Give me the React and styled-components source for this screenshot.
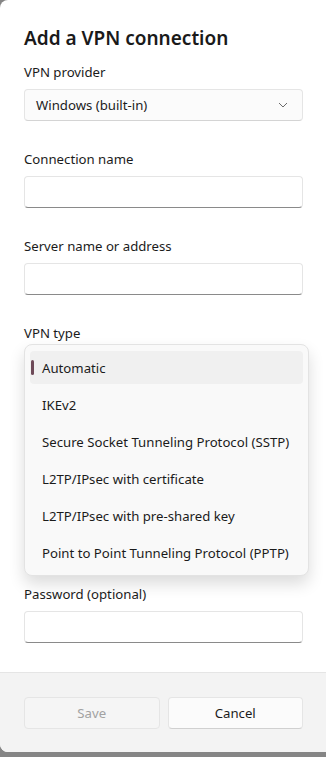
import React from "react";
import styled, { createGlobalStyle } from "styled-components";

const Global = createGlobalStyle`
  html, body { margin: 0; padding: 0; }
  body {
    background: #858585;
    width: 326px;
    height: 757px;
    overflow: hidden;
    font-family: "Noto Sans", "Open Sans", sans-serif;
    color: #1b1b1b;
  }
`;

const Dialog = styled.div`
  width: 340px;
  height: 752px;
  background: #ffffff;
  border-radius: 8px;
  display: flex;
  flex-direction: column;
  overflow: hidden;
`;

const Body = styled.div`
  position: relative;
  flex: 1;
  padding: 24px 37px 0 24px;
  display: flex;
  flex-direction: column;
`;

const Title = styled.h1`
  margin: 0 0 10px;
  font-size: 19px;
  line-height: 28px;
  font-weight: 600;
  color: #1a1a1a;
`;

const Field = styled.div`
  display: flex;
  flex-direction: column;
  gap: 7px;
  margin-bottom: 28px;
`;

const Label = styled.div`
  font-size: 13.2px;
  line-height: 20px;
  height: 20px;
  color: #1b1b1b;
  white-space: nowrap;
`;

const Combo = styled.div`
  height: 32px;
  box-sizing: border-box;
  border: 1px solid #e5e5e5;
  border-bottom-color: #d4d4d4;
  border-radius: 4px;
  background: #fbfbfb;
  display: flex;
  align-items: center;
  justify-content: space-between;
  padding: 0 14px 0 11px;
  font-size: 13.2px;
  white-space: nowrap;
`;

const TextBox = styled.div`
  height: 32px;
  box-sizing: border-box;
  border: 1px solid #e5e5e5;
  border-bottom: 1px solid #8a8a8a;
  border-radius: 4px;
  background: #ffffff;
`;

const Popup = styled.div`
  position: absolute;
  left: 24px;
  top: 344px;
  width: 285px;
  box-sizing: border-box;
  padding: 6px 5px;
  background: #f9f9f9;
  border: 1px solid #e3e3e3;
  border-radius: 8px;
  box-shadow: 0 8px 16px rgba(0, 0, 0, 0.14);
  display: flex;
  flex-direction: column;
  gap: 4px;
`;

const Item = styled.div`
  position: relative;
  height: 33px;
  display: flex;
  align-items: center;
  padding-left: 12px;
  border-radius: 4px;
  font-size: 13.2px;
  white-space: nowrap;
  color: #1b1b1b;
  background: ${(p) => (p.$selected ? "#f0f0f0" : "transparent")};
`;

const Indicator = styled.span`
  position: absolute;
  left: 1px;
  top: 9px;
  width: 3px;
  height: 15px;
  border-radius: 2px;
  background: #6e4a58;
`;

const Footer = styled.div`
  height: 80px;
  box-sizing: border-box;
  border-top: 1px solid #e5e5e5;
  background: #f3f3f3;
  padding: 24px 37px 0 24px;
  display: grid;
  grid-template-columns: 1fr 1fr;
  column-gap: 8px;
  align-items: start;
`;

const Button = styled.button`
  height: 32px;
  box-sizing: border-box;
  border-radius: 4px;
  font-family: inherit;
  font-size: 13.2px;
  border: 1px solid #e5e5e5;
  border-bottom-color: ${(p) => (p.$disabled ? "#e5e5e5" : "#d0d0d0")};
  background: ${(p) => (p.$disabled ? "#f5f5f5" : "#fbfbfb")};
  color: ${(p) => (p.$disabled ? "#a2a2a2" : "#1b1b1b")};
`;

const Chevron = () => (
  <svg width="10" height="6" viewBox="0 0 10 6">
    <path d="M1 1 L5 5 L9 1" fill="none" stroke="#6b6b6b" strokeWidth="1" />
  </svg>
);

const types = [
  "Automatic",
  "IKEv2",
  "Secure Socket Tunneling Protocol (SSTP)",
  "L2TP/IPsec with certificate",
  "L2TP/IPsec with pre-shared key",
  "Point to Point Tunneling Protocol (PPTP)",
];

export default function App() {
  return (
    <>
      <Global />
      <Dialog>
        <Body>
          <Title>Add a VPN connection</Title>
          <Field>
            <Label>VPN provider</Label>
            <Combo>
              <span>Windows (built-in)</span>
              <Chevron />
            </Combo>
          </Field>
          <Field>
            <Label>Connection name</Label>
            <TextBox />
          </Field>
          <Field>
            <Label>Server name or address</Label>
            <TextBox />
          </Field>
          <Field>
            <Label>VPN type</Label>
            <Combo />
          </Field>
          <Field>
            <Label />
            <Combo />
          </Field>
          <Field>
            <Label />
            <TextBox />
          </Field>
          <Field>
            <Label>Password (optional)</Label>
            <TextBox />
          </Field>
          <Popup>
            {types.map((t, i) => (
              <Item key={t} $selected={i === 0}>
                {i === 0 && <Indicator />}
                {t}
              </Item>
            ))}
          </Popup>
        </Body>
        <Footer>
          <Button $disabled>Save</Button>
          <Button>Cancel</Button>
        </Footer>
      </Dialog>
    </>
  );
}
